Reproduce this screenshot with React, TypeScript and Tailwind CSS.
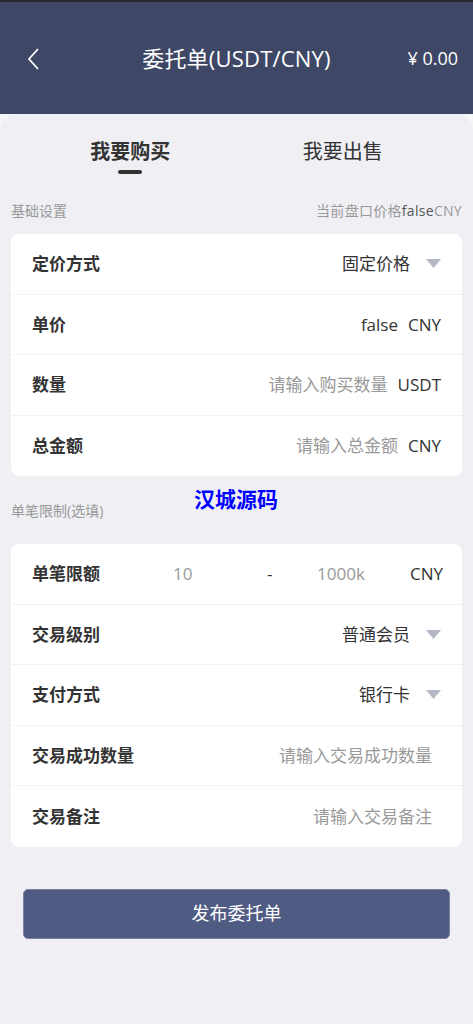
import React, { useState } from 'react';

type Tab = 'buy' | 'sell';

const FONT = '"Open Sans", "Noto Sans CJK SC", sans-serif';

const Caret: React.FC = () => (
  <svg width="15" height="9" viewBox="0 0 15 9" className="ml-4 shrink-0">
    <path d="M0 0h15L7.5 9z" fill="#b4b8c4" />
  </svg>
);

const Row: React.FC<{ label: string; last?: boolean; children: React.ReactNode }> = ({ label, last, children }) => (
  <div className={`h-[60.5px] flex items-center pl-[21px] pr-[21px] ${last ? '' : 'border-b border-[#f2f2f5]'}`}>
    <div className="text-[17px] font-bold text-[#333] shrink-0">{label}</div>
    <div className="flex-1 min-w-0 flex items-center justify-end text-[17px]">{children}</div>
  </div>
);

const App: React.FC = () => {
  const [tab, setTab] = useState<Tab>('buy');

  return (
    <div className="min-h-[1024px] bg-[#efeff4]" style={{ fontFamily: FONT }}>
      {/* 顶部栏 */}
      <div className="h-[114px] bg-[#3e4765] border-t-2 border-[#2a2a2c] grid grid-cols-[1fr_auto_1fr] items-center px-[15px] text-white">
        <div className="pl-[12px]">
          <svg width="14" height="24" viewBox="0 0 14 24" className="mt-[2px]">
            <path d="M11 2L2 12l9 10" fill="none" stroke="#fff" strokeWidth="1.8" />
          </svg>
        </div>
        <div className="text-center text-[22px] leading-none tracking-[0.2px]">委托单(USDT/CNY)</div>
        <div className="text-right text-[18px] leading-none">¥ 0.00</div>
      </div>

      <div className="bg-[#f6f6f9]">
        <div className="bg-[#efeff4] rounded-t-[18px] pt-[24px] pb-[85px]">
          {/* 买卖切换 */}
          <div className="flex px-[24px]">
            {([
              ['buy', '我要购买'],
              ['sell', '我要出售'],
            ] as [Tab, string][]).map(([key, text]) => (
              <button
                key={key}
                onClick={() => setTab(key)}
                className="flex-1 flex flex-col items-center"
              >
                <span className={`text-[20px] leading-[28px] text-[#333] ${tab === key ? 'font-bold' : ''}`}>{text}</span>
                <span className={`mt-[4px] h-[4px] w-[24px] rounded-full ${tab === key ? 'bg-[#333]' : 'bg-transparent'}`} />
              </button>
            ))}
          </div>

          <div className="flex items-center justify-between px-[11px] mt-[26px] text-[14px] text-[#999]">
            <span>基础设置</span>
            <span className="tracking-[0.3px]">
              当前盘口价格<span className="text-[#555]">false</span>CNY
            </span>
          </div>

          <div className="mx-[11px] mt-[13px] bg-white rounded-[8px]">
            <Row label="定价方式">
              <span className="text-[#333]">固定价格</span>
              <Caret />
            </Row>
            <Row label="单价">
              <span className="text-[#333]">false</span>
              <span className="text-[#333] ml-[10px]">CNY</span>
            </Row>
            <Row label="数量">
              <span className="text-[#999]">请输入购买数量</span>
              <span className="text-[#333] ml-[10px]">USDT</span>
            </Row>
            <Row label="总金额" last>
              <span className="text-[#999]">请输入总金额</span>
              <span className="text-[#333] ml-[10px]">CNY</span>
            </Row>
          </div>

          <div className="relative px-[11px] mt-[27px] h-[16px] text-[14px] text-[#999] leading-[16px]">
            单笔限制(选填)
            <span className="absolute left-[194px] top-[-15px] text-[21px] font-bold text-[#0000ff] leading-[22px]">汉城源码</span>
          </div>

          <div className="mx-[11px] mt-[25px] bg-white rounded-[8px]">
            <div className="h-[60.5px] flex items-center pl-[21px] pr-[19px] border-b border-[#f2f2f5] text-[17px]">
              <div className="font-bold text-[#333] w-[141px] shrink-0">单笔限额</div>
              <span className="text-[#999] w-[94px]">10</span>
              <span className="text-[#333] w-[50px]">-</span>
              <span className="text-[#999] flex-1">1000k</span>
              <span className="text-[#333]">CNY</span>
            </div>
            <Row label="交易级别">
              <span className="text-[#333]">普通会员</span>
              <Caret />
            </Row>
            <Row label="支付方式">
              <span className="text-[#333]">银行卡</span>
              <Caret />
            </Row>
            <Row label="交易成功数量">
              <span className="text-[#999] mr-[9px]">请输入交易成功数量</span>
            </Row>
            <Row label="交易备注" last>
              <span className="text-[#999] mr-[9px]">请输入交易备注</span>
            </Row>
          </div>

          <div className="px-[23px] mt-[42px]">
            <button className="w-full h-[50px] rounded-[5px] bg-[#4f5b83] border border-[#7a84a2] text-white text-[18px]">
              发布委托单
            </button>
          </div>
        </div>
      </div>
    </div>
  );
};

export default App;
